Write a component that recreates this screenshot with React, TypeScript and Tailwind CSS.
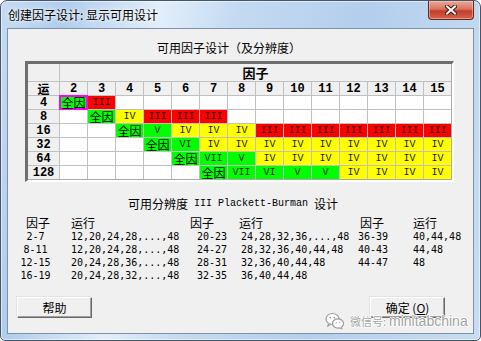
import React from 'react';

const cjk = "font-['Noto_Sans_CJK_SC',sans-serif]";

const tone: Record<string, string> = {
  F: 'bg-[#00ff00]',
  III: 'bg-[#ff0000]',
  IV: 'bg-[#ffff00]',
  V: 'bg-[#00ff00]',
  VI: 'bg-[#00ff00]',
  VII: 'bg-[#00ff00]',
  '': 'bg-white',
};

const factors = ['2', '3', '4', '5', '6', '7', '8', '9', '10', '11', '12', '13', '14', '15'];

const grid: { run: string; cells: string[] }[] = [
  { run: '4', cells: ['F', 'III', '', '', '', '', '', '', '', '', '', '', '', ''] },
  { run: '8', cells: ['', 'F', 'IV', 'III', 'III', 'III', '', '', '', '', '', '', '', ''] },
  { run: '16', cells: ['', '', 'F', 'V', 'IV', 'IV', 'IV', 'III', 'III', 'III', 'III', 'III', 'III', 'III'] },
  { run: '32', cells: ['', '', '', 'F', 'VI', 'IV', 'IV', 'IV', 'IV', 'IV', 'IV', 'IV', 'IV', 'IV'] },
  { run: '64', cells: ['', '', '', '', 'F', 'VII', 'V', 'IV', 'IV', 'IV', 'IV', 'IV', 'IV', 'IV'] },
  { run: '128', cells: ['', '', '', '', '', 'F', 'VII', 'VI', 'V', 'V', 'IV', 'IV', 'IV', 'IV'] },
];

const pb = [
  ['2-7', '12,20,24,28,...,48', '20-23', '24,28,32,36,...,48', '36-39', '40,44,48'],
  ['8-11', '12,20,24,28,...,48', '24-27', '28,32,36,40,44,48', '40-43', '44,48'],
  ['12-15', '20,24,28,36,...,48', '28-31', '32,36,40,44,48', '44-47', '48'],
  ['16-19', '20,24,28,32,...,48', '32-35', '36,40,44,48', '', ''],
];

function Cell({ v, selected }: { v: string; selected?: boolean }) {
  if (v === 'F') {
    return (
      <div
        className={`relative flex items-center justify-center ${tone.F} ${
          selected ? 'z-10 shadow-[0_0_0_1px_#ff00ff,inset_0_0_0_1px_#ff00ff]' : ''
        } ${cjk} text-[12px] leading-[12px] text-black`}
      >
        全因
      </div>
    );
  }
  return (
    <div className={`flex items-center justify-center ${tone[v]} font-['Liberation_Mono',monospace] text-[10px] leading-[12px] text-[#1a1a00]`}>
      {v}
    </div>
  );
}

function Btn({ children }: { children: React.ReactNode }) {
  return (
    <button className={`h-[21px] w-[75px] bg-[#f0f0f0] border border-t-white border-l-white border-r-[#696969] border-b-[#696969] shadow-[inset_-1px_-1px_0_#a0a0a0,-1px_-1px_0_#e3e3e3] ${cjk} text-[12px] leading-[12px] text-black`}>
      {children}
    </button>
  );
}

function WeChat() {
  return (
    <svg width="20" height="18" viewBox="0 0 20 18">
      <ellipse cx="7.5" cy="7" rx="6.5" ry="5.5" fill="#fff" stroke="#9c9c9c" strokeWidth="1.2" />
      <path d="M3.5 11.5 L2.8 14 L5.8 12.3" fill="#fff" stroke="#9c9c9c" strokeWidth="1.1" />
      <ellipse cx="13" cy="11.5" rx="5.5" ry="4.6" fill="#fff" stroke="#9c9c9c" strokeWidth="1.2" />
      <path d="M16 15.2 L17.2 17 L14.2 15.8" fill="#fff" stroke="#9c9c9c" strokeWidth="1" />
      <circle cx="5.3" cy="5.6" r="0.9" fill="#9c9c9c" />
      <circle cx="9.3" cy="5.6" r="0.9" fill="#9c9c9c" />
      <circle cx="11.3" cy="10.6" r="0.7" fill="#9c9c9c" />
      <circle cx="14.8" cy="10.6" r="0.7" fill="#9c9c9c" />
    </svg>
  );
}

export default function App() {
  return (
    <div className="w-[481px] h-[341px] bg-white">
      <div className="relative flex flex-col w-[481px] h-[341px] px-[6px] pb-[6px] rounded-t-[7px] rounded-b-[5px] border border-[#46566a] bg-[linear-gradient(100deg,#c6dbf2_0%,#b0cdec_12%,#e2eefa_30%,#c4daf2_44%,#b3cfed_68%,#c8dcf3_100%)] shadow-[inset_0_0_0_1px_rgba(255,255,255,0.55)]">
        {/* Title bar */}
        <div className="h-[27px] flex items-start justify-between">
          <div className={`pl-[1px] pt-[7px] ${cjk} text-[12px] leading-[14px] text-black [text-shadow:0_0_6px_#fff,0_0_3px_#fff]`}>
            创建因子设计: 显示可用设计
          </div>
          <div className="w-[46px] h-[19px] rounded-b-[4px] border border-t-0 border-[#6a2419] bg-[linear-gradient(180deg,#e9a897_0%,#d7745f_45%,#c33d27_55%,#d2644d_100%)] shadow-[inset_0_0_0_1px_rgba(255,210,200,0.5)] flex items-center justify-center">
            <svg width="12" height="10" viewBox="0 0 12 10">
              <path d="M2 1.5 L10 8.5 M10 1.5 L2 8.5" stroke="#4a1810" strokeWidth="4" strokeLinecap="square" />
              <path d="M2 1.5 L10 8.5 M10 1.5 L2 8.5" stroke="#fff" strokeWidth="2" strokeLinecap="square" />
            </svg>
          </div>
        </div>

        {/* Client area */}
        <div className="flex-1 flex flex-col border border-[#7d91a9] bg-[#f0f0f0]">
          <div className={`mt-[13px] ml-[149px] ${cjk} text-[12px] leading-[12px] text-black`}>
            可用因子设计（及分辨度）
          </div>

          <div className="mt-[7px] ml-[17px] w-fit border-l-[3px] border-t-[3px] border-r-2 border-b-2 border-[#6e6e6e] border-r-white border-b-white">
            <div className="grid grid-cols-[31px_repeat(14,27px)] grid-rows-[17px_13px_repeat(6,13px)] gap-px bg-[#c0c0c0] border-r border-b border-[#ababab]">
              <div className="bg-[#f0f0f0]" />
              <div className={`col-span-14 bg-[#f0f0f0] flex items-center justify-center ${cjk} font-bold text-[13px] leading-[13px] text-black`}>
                因子
              </div>

              <div className={`bg-[#f0f0f0] flex items-center justify-center ${cjk} font-bold text-[12px] leading-[12px] text-black`}>
                运
              </div>
              {factors.map((f) => (
                <div key={f} className="bg-[#f0f0f0] flex items-center justify-center font-['Liberation_Mono',monospace] font-bold text-[12px] leading-[12px] text-black">
                  {f}
                </div>
              ))}

              {grid.map((row, r) => (
                <React.Fragment key={row.run}>
                  <div className="bg-[#f0f0f0] flex items-center justify-center font-['Liberation_Mono',monospace] font-bold text-[12px] leading-[12px] text-black">
                    {row.run}
                  </div>
                  {row.cells.map((v, i) => (
                    <Cell key={i} v={v} selected={r === 0 && i === 0} />
                  ))}
                </React.Fragment>
              ))}
            </div>
          </div>

          <div className="mt-[16px] ml-[120px] flex items-center h-[12px] text-black">
            <span className={`${cjk} text-[12px] leading-[12px]`}>可用分辨度</span>
            <span className="font-['Liberation_Mono',monospace] text-[10px] leading-[12px] whitespace-pre"> III Plackett-Burman </span>
            <span className={`${cjk} text-[12px] leading-[12px]`}>设计</span>
          </div>

          <div className="mt-[6px] flex flex-col text-black">
            <div className={`flex h-[14px] items-center ${cjk} text-[12px] leading-[12px]`}>
              <span className="w-[63px] pl-[18px]">因子</span>
              <span className="w-[119px]">运行</span>
              <span className="w-[49px]">因子</span>
              <span className="w-[119px]">运行</span>
              <span className="w-[55px] pl-[2px]">因子</span>
              <span>运行</span>
            </div>
            {pb.map((r, i) => (
              <div key={i} className="flex h-[13px] items-center font-['DejaVu_Sans_Mono',monospace] text-[10px] leading-[12px]">
                <span className="w-[63px] pl-[12px]">
                  <span className="block w-[31px] text-center">{r[0]}</span>
                </span>
                <span className="w-[119px]">{r[1]}</span>
                <span className="w-[49px] pl-[7px]">{r[2]}</span>
                <span className="w-[119px] pl-[2px]">{r[3]}</span>
                <span className="w-[55px]">{r[4]}</span>
                <span>{r[5]}</span>
              </div>
            ))}
          </div>

          <div className="mt-[15px] flex justify-between pl-[9px] pr-[28px]">
            <Btn>帮助</Btn>
            <Btn>
              确定 (<span className="underline">O</span>)
            </Btn>
          </div>
        </div>

        {/* Watermark */}
        <div className="absolute left-[324px] top-[311px] flex items-center gap-[5px] text-[#a3a3a3] [text-shadow:1px_0_0_#fff,-1px_0_0_#fff,0_1px_0_#fff,0_-1px_0_#fff]">
          <WeChat />
          <span className={`${cjk} text-[11px] leading-[14px]`}>微信号:</span>
          <span className="font-['Liberation_Sans',sans-serif] text-[14px] leading-[14px] -ml-[2px]">minitabchina</span>
        </div>
      </div>
    </div>
  );
}
